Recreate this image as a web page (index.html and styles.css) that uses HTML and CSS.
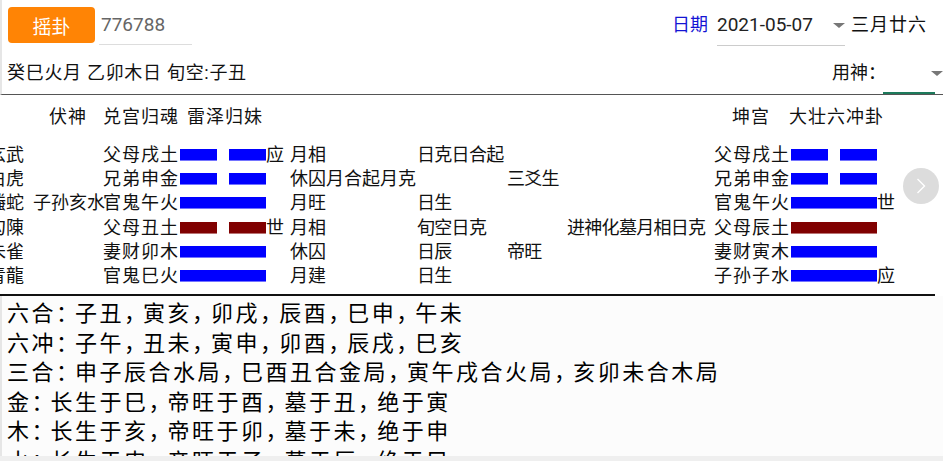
FILE: index.html
```html
<!DOCTYPE html>
<html lang="zh-CN">
<head>
    <meta charset="UTF-8">
    <meta name="viewport" content="width=device-width, initial-scale=1.0">
    <title>六爻排盘</title>
    <link rel="stylesheet" href="styles.css">
</head>
<body>
<div class="top">
    <div class="toolbar">
        <button type="button" class="shake">摇卦</button>
        <div class="code">776788</div>
        <span class="date-label">日期</span>
        <div class="date">2021-05-07<span class="arrow"></span></div>
        <span class="lunar">三月廿六</span>
    </div>
    <div class="infobar">
        <span class="ganzhi">癸巳火月 乙卯木日 旬空:子丑</span>
        <span class="ys-label">用神：</span>
        <div class="spinner"><span class="arrow"></span></div>
    </div>
</div>

<div class="hex">
    <div class="table">
        <div class="cols head">
            <span class="h-fu">伏神</span>
            <span class="h-main">兑宫归魂<em>雷泽归妹</em></span>
            <span class="h-gong">坤宫</span>
            <span class="h-bian">大壮六冲卦</span>
        </div>
        <div class="cols">
            <span>玄武</span><span></span><span>父母戌土</span>
            <span class="yao yin"><i></i><i></i></span><span>应</span>
            <span>月相</span><span>日克日合起</span><span></span><span></span>
            <span>父母戌土</span><span class="yao yin"><i></i><i></i></span><span></span>
        </div>
        <div class="cols">
            <span>白虎</span><span></span><span>兄弟申金</span>
            <span class="yao yin"><i></i><i></i></span><span></span>
            <span>休囚月合起月克</span><span></span><span>三爻生</span><span></span>
            <span>兄弟申金</span><span class="yao yin"><i></i><i></i></span><span></span>
        </div>
        <div class="cols">
            <span>螣蛇</span><span>子孙亥水</span><span>官鬼午火</span>
            <span class="yao yang"><i></i></span><span></span>
            <span>月旺</span><span>日生</span><span></span><span></span>
            <span>官鬼午火</span><span class="yao yang"><i></i></span><span>世</span>
        </div>
        <div class="cols">
            <span>勾陳</span><span></span><span>父母丑土</span>
            <span class="yao yin red"><i></i><i></i></span><span>世</span>
            <span>月相</span><span>旬空日克</span><span></span><span>进神化墓月相日克</span>
            <span>父母辰土</span><span class="yao yang red"><i></i></span><span></span>
        </div>
        <div class="cols">
            <span>朱雀</span><span></span><span>妻财卯木</span>
            <span class="yao yang"><i></i></span><span></span>
            <span>休囚</span><span>日辰</span><span>帝旺</span><span></span>
            <span>妻财寅木</span><span class="yao yang"><i></i></span><span></span>
        </div>
        <div class="cols">
            <span>青龍</span><span></span><span>官鬼巳火</span>
            <span class="yao yang"><i></i></span><span></span>
            <span>月建</span><span>日生</span><span></span><span></span>
            <span>子孙子水</span><span class="yao yang"><i></i></span><span>应</span>
        </div>
    </div>
    <button type="button" class="next">
        <svg width="36" height="36" viewBox="0 0 36 36">
            <circle cx="18" cy="18" r="18" fill="#dcdcdc"/>
            <path d="M14.5 11 L21.5 18 L14.5 25" fill="none" stroke="#fff" stroke-width="1.4"/>
        </svg>
    </button>
</div>

<div class="rule"></div>

<div class="notes">
    <p>六合<b>：</b>子丑<b>，</b>寅亥<b>，</b>卯戌<b>，</b>辰酉<b>，</b>巳申<b>，</b>午未</p>
    <p>六冲<b>：</b>子午<b>，</b>丑未<b>，</b>寅申<b>，</b>卯酉<b>，</b>辰戌<b>，</b>巳亥</p>
    <p>三合<b>：</b>申子辰合水局<b>，</b>巳酉丑合金局<b>，</b>寅午戌合火局<b>，</b>亥卯未合木局</p>
    <p>金<b>：</b>长生于巳<b>，</b>帝旺于酉<b>，</b>墓于丑<b>，</b>绝于寅</p>
    <p>木<b>：</b>长生于亥<b>，</b>帝旺于卯<b>，</b>墓于未<b>，</b>绝于申</p>
    <p>水<b>：</b>长生于申<b>，</b>帝旺于子<b>，</b>墓于辰<b>，</b>绝于巳</p>
</div>
<div class="strip"></div>
</body>
</html>
```

FILE: styles.css
```css
body {
    margin: 0;
    font-family: Roboto, "Noto Sans CJK SC", sans-serif;
    color: #111;
    background-color: #fff;
    overflow: hidden;
}

/* top bars */
.top {
    border-left: 2px solid #e6e6e6;
    border-bottom: 1px solid #555;
}

.toolbar {
    display: flex;
    align-items: flex-start;
    height: 43px;
    padding-top: 7px;
}

.shake {
    margin-left: 6px;
    width: 87px;
    height: 36px;
    padding: 0;
    border: none;
    border-radius: 4px;
    background-color: #ff8405;
    color: #fff;
    font-family: inherit;
    font-size: 19px;
}

.code {
    margin-left: 4px;
    width: 93px;
    height: 38px;
    padding-left: 2px;
    box-sizing: border-box;
    border-bottom: 1px solid #ddd;
    line-height: 36px;
    font-size: 19px;
    color: #666;
}

.date-label {
    margin-left: auto;
    line-height: 36px;
    font-size: 18px;
    color: #1414d4;
}

.date {
    position: relative;
    margin-left: 9px;
    width: 128px;
    height: 39px;
    box-sizing: border-box;
    border-bottom: 1px solid #ccc;
    line-height: 36px;
    font-size: 19px;
    color: #222;
}

.arrow {
    position: absolute;
    width: 0;
    height: 0;
    border-left: 6px solid transparent;
    border-right: 6px solid transparent;
    border-top: 5px solid #777;
}

.date .arrow {
    right: 0;
    top: 16px;
}

.lunar {
    margin-left: 6px;
    margin-right: 16px;
    line-height: 36px;
    font-size: 18px;
    letter-spacing: 1px;
}

.infobar {
    display: flex;
    align-items: flex-end;
    height: 44px;
}

.ganzhi {
    margin-left: 5px;
    margin-bottom: 9px;
    font-size: 18px;
    line-height: 24px;
    letter-spacing: 0.7px;
}

.ys-label {
    margin-left: auto;
    margin-bottom: 9px;
    font-size: 18px;
    line-height: 24px;
}

.spinner {
    position: relative;
    width: 52px;
    height: 41px;
    margin-left: -3px;
    margin-right: 8px;
    border-bottom: 2px solid #1d7a5c;
}

.spinner .arrow {
    right: -8px;
    top: 20px;
}

/* hexagram table */
.hex {
    position: relative;
    height: 199px;
    font-size: 18px;
}

.table {
    margin-left: -12px;
    padding-top: 10px;
}

.cols {
    display: grid;
    grid-template-columns: 45px 70px 77px 86px 24px 127px 90px 60px 147px 77px 86px 30px;
    align-items: center;
    height: 24.2px;
    line-height: 24px;
    white-space: nowrap;
}

.cols > :nth-child(3),
.cols > :nth-child(10) {
    letter-spacing: 1px;
}

.cols > :nth-child(7),
.cols > :nth-child(8),
.cols > :nth-child(9) {
    letter-spacing: -0.7px;
}

.head {
    height: 24px;
    margin-bottom: 14px;
}

.head > span {
    letter-spacing: 1px;
}

.h-fu {
    grid-column: 2;
    text-align: center;
}

.h-main {
    grid-column: 3 / span 5;
}

.h-main em {
    font-style: normal;
    margin-left: 8px;
}

.h-gong {
    grid-column: 10;
    padding-left: 18px;
}

.h-bian {
    grid-column: 11 / span 2;
    margin-left: -2px;
}

.yao {
    display: flex;
    justify-content: space-between;
    height: 12px;
}

.yao i {
    flex: 0 0 37px;
    background-color: #0000ff;
    box-shadow: inset 0 -1px 0 rgba(255, 255, 255, 0.45);
}

.yao.yang i {
    flex-basis: 100%;
}

.yao.red i {
    background-color: #800000;
}

.next {
    position: absolute;
    left: 903px;
    top: 73px;
    padding: 0;
    border: none;
    background: none;
    line-height: 0;
}

.rule {
    width: 935px;
    height: 2px;
    background-color: #111;
}

/* notes */
.notes {
    height: 160px;
    overflow: hidden;
    box-sizing: border-box;
    padding: 3px 0 0 5px;
    border-left: 2px solid #e6e6e6;
    background-color: #fcfcfc;
    font-size: 22px;
    line-height: 29.5px;
    letter-spacing: 2.5px;
    color: #000;
}

.notes p {
    margin: 0;
    white-space: nowrap;
}

.notes b {
    font-weight: normal;
    letter-spacing: -3px;
}

.strip {
    height: 5px;
    background-color: #efefef;
}
```
